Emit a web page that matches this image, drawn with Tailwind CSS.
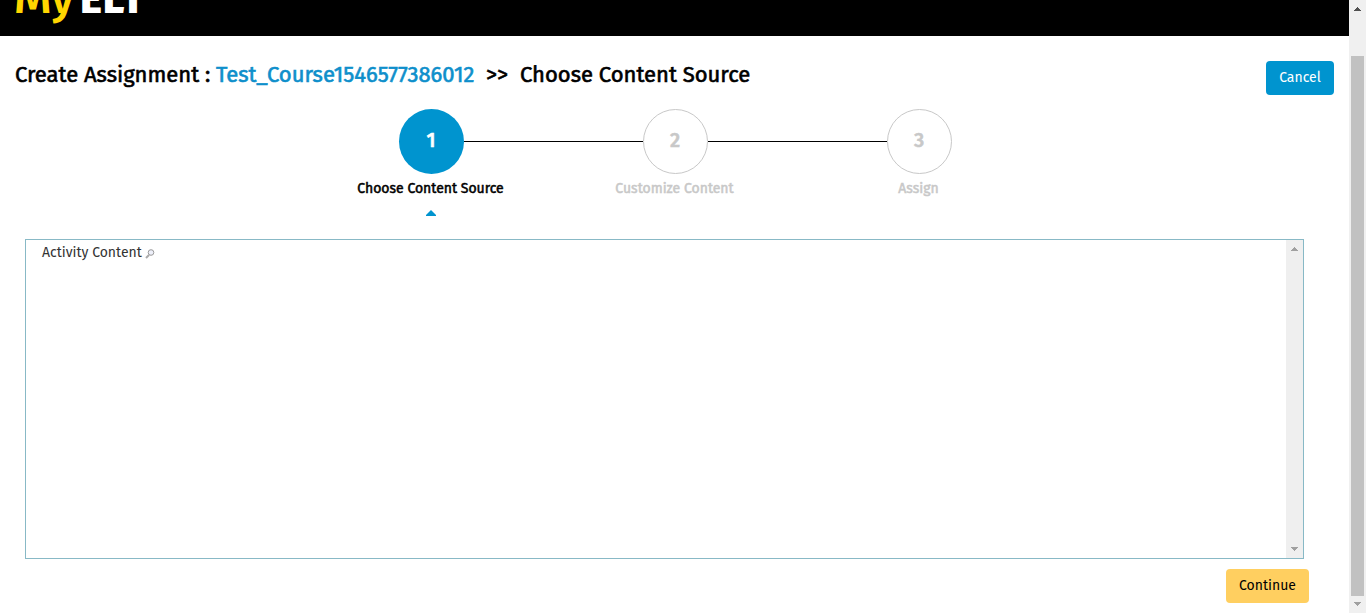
<!DOCTYPE html>
<html lang="en">
<head>
<meta charset="utf-8">
<title>Create Assignment</title>
<script src="https://cdn.jsdelivr.net/npm/@tailwindcss/browser@4"></script>
</head>
<body class="flex h-[613px] w-[1366px] overflow-hidden bg-white font-['Fira_Sans','Open_Sans',sans-serif] text-black">
<div class="flex h-full w-[1349px] flex-col">
  <header class="flex h-9 shrink-0 items-baseline-last overflow-hidden bg-black pb-3 pl-[14px] text-[48px] leading-[50px] whitespace-nowrap">
    <span class="w-[66px] shrink-0 tracking-[-1px] font-medium text-[#ffd600]">My</span><span class="text-[42px] font-extrabold tracking-[0.9px] text-white">ELT</span>
  </header>
  <div class="flex h-[73px] shrink-0 items-start justify-between pt-[25px] pr-[15px] pl-[15px]">
    <h1 class="flex h-7 items-center text-[22px] leading-7 font-normal whitespace-nowrap [-webkit-text-stroke:0.6px]">
      <span class="w-[201px]">Create Assignment :</span>
      <a class="w-[270px] text-[#0e8fcb]">Test_Course1546577386012</a>
      <span class="w-[34px]">&gt;&gt;</span>
      <span>Choose Content Source</span>
    </h1>
    <button class="h-[34px] w-[68px] rounded-[4px] bg-[#0094cf] text-sm text-white">Cancel</button>
  </div>
  <ol class="ml-[309px] flex h-[130px] w-[732px] shrink-0 text-sm leading-5 font-normal whitespace-nowrap [-webkit-text-stroke:0.5px]">
    <li class="flex w-[244px] flex-col items-center">
      <div class="flex w-full items-center"><i class="flex-1"></i><b class="flex size-[65px] items-center justify-center rounded-full bg-[#0094cf] pb-[3px] text-xl font-medium text-white">1</b><i class="h-px flex-1 bg-black"></i></div>
      <span class="mt-[5px] pr-px">Choose Content Source</span>
      <svg class="mt-[11px] mr-px" width="10" height="6"><path d="M5 0 10 5v1H0V5Z" fill="#0094cf"/></svg>
    </li>
    <li class="flex w-[244px] flex-col items-center text-[#c8c8c8]">
      <div class="flex w-full items-center"><i class="h-px flex-1 bg-black"></i><b class="flex size-[65px] items-center justify-center rounded-full border border-[#c8c8c8] pb-[3px] text-xl font-medium">2</b><i class="h-px flex-1 bg-black"></i></div>
      <span class="mt-[5px] pr-px">Customize Content</span>
    </li>
    <li class="flex w-[244px] flex-col items-center text-[#c8c8c8]">
      <div class="flex w-full items-center"><i class="h-px flex-1 bg-black"></i><b class="flex size-[65px] items-center justify-center rounded-full border border-[#c8c8c8] pb-[3px] text-xl font-medium">3</b><i class="flex-1"></i></div>
      <span class="mt-[5px] pr-px">Assign</span>
    </li>
  </ol>
  <main class="ml-[25px] flex h-[320px] w-[1279px] shrink-0 justify-between border border-[#88b9c6]">
    <div class="flex h-[26px] items-center pl-4 text-sm text-[#333]">
      <span class="w-[103px] whitespace-nowrap">Activity Content</span>
      <svg class="mt-px" width="10" height="10" fill="none"><path d="m1 9 3-3" stroke="#aaa" stroke-width="2"/><circle cx="6" cy="3.5" r="2.8" fill="#eef0fa" stroke="#999"/></svg>
    </div>
    <div class="flex w-[17px] flex-col items-center justify-between bg-[#efefef] pt-[7px] pb-[7px]">
      <svg width="7" height="4" shape-rendering="crispEdges"><path d="M3 0h1v1h1v1h1v1h1v1H0V3h1V2h1V1h1Z" fill="#a0a0a0"/></svg>
      <svg width="7" height="4" shape-rendering="crispEdges"><path d="M0 0h7v1H6v1H5v1H4v1H3V3H2V2H1V1H0Z" fill="#a0a0a0"/></svg>
    </div>
  </main>
  <button class="mt-[10px] ml-[1226px] h-[34px] w-[83px] shrink-0 rounded-[4px] bg-[#ffcf60] text-sm">Continue</button>
</div>
<aside class="flex h-full w-[17px] flex-col items-center bg-[#f0f0f0] pt-[7px]">
  <svg class="shrink-0" width="7" height="4" shape-rendering="crispEdges"><path d="M3 0h1v1h1v1h1v1h1v1H0V3h1V2h1V1h1Z" fill="#505050"/></svg>
  <div class="mt-[45px] h-[540px] w-[13px] shrink-0 bg-[#c1c1c1]"></div>
  <svg class="mt-[6px] shrink-0" width="7" height="4" shape-rendering="crispEdges"><path d="M0 0h7v1H6v1H5v1H4v1H3V3H2V2H1V1H0Z" fill="#a0a0a0"/></svg>
</aside>
</body>
</html>
